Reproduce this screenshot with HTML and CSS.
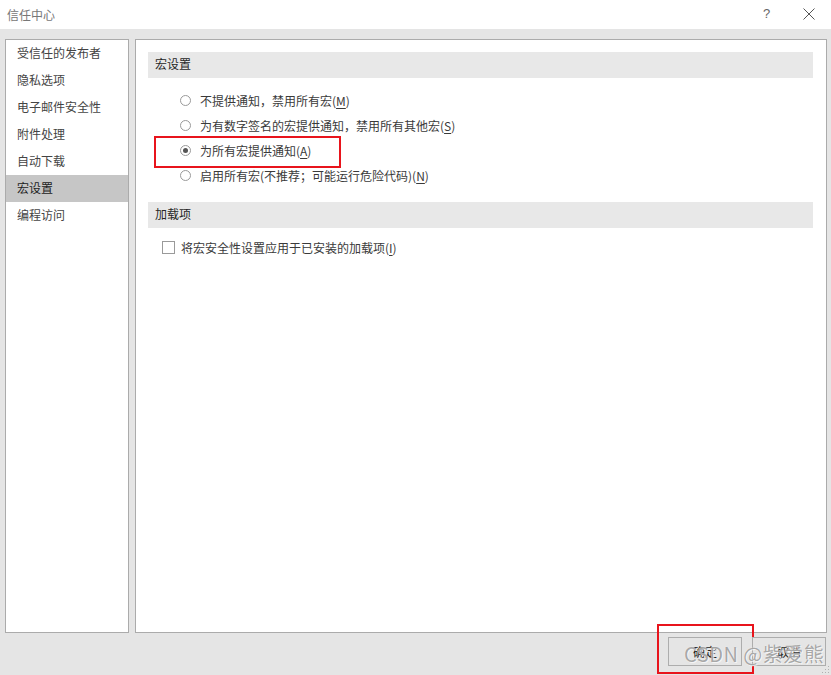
FILE: index.html
```html
<!DOCTYPE html>
<html lang="zh-CN">
<head>
<meta charset="utf-8">
<title>信任中心</title>
<link rel="stylesheet" href="styles.css">
</head>
<body>
<div class="dialog">
  <div class="titlebar">
    <span class="title">信任中心</span>
    <div class="title-controls">
      <span class="help">?</span>
      <svg class="close" width="12" height="12" viewBox="0 0 12 12"><path d="M0.5 0.5 L11.5 11.5 M11.5 0.5 L0.5 11.5" stroke="#555" stroke-width="1" fill="none"/></svg>
    </div>
  </div>
  <div class="body">
    <div class="nav">
      <div class="nav-item">受信任的发布者</div>
      <div class="nav-item">隐私选项</div>
      <div class="nav-item">电子邮件安全性</div>
      <div class="nav-item">附件处理</div>
      <div class="nav-item">自动下载</div>
      <div class="nav-item active">宏设置</div>
      <div class="nav-item">编程访问</div>
    </div>
    <div class="content">
      <div class="section-head">宏设置</div>
      <div class="radios">
        <div class="radio-row"><span class="radio"></span><span>不提供通知，禁用所有宏(<u>M</u>)</span></div>
        <div class="radio-row"><span class="radio"></span><span>为有数字签名的宏提供通知，禁用所有其他宏(<u>S</u>)</span></div>
        <div class="radio-row"><span class="radio checked"></span><span>为所有宏提供通知(<u>A</u>)</span><span class="mark mark-radio"></span></div>
        <div class="radio-row"><span class="radio"></span><span>启用所有宏(不推荐；可能运行危险代码)(<u>N</u>)</span></div>
      </div>
      <div class="section-head">加载项</div>
      <div class="check-row"><span class="checkbox"></span><span>将宏安全性设置应用于已安装的加载项(<u>I</u>)</span></div>
    </div>
  </div>
  <div class="footer">
    <div class="btn ok">确定<span class="mark mark-ok"></span></div>
    <div class="btn">取消</div>
    <span class="watermark">CSDN @紫爱熊</span>
    <svg class="grip" width="8" height="8" viewBox="0 0 8 8"><g fill="#b0b0b0"><rect x="6" y="0" width="1" height="1"/><rect x="3" y="3" width="1" height="1"/><rect x="6" y="3" width="1" height="1"/><rect x="0" y="6" width="1" height="1"/><rect x="3" y="6" width="1" height="1"/><rect x="6" y="6" width="1" height="1"/></g></svg>
  </div>
</div>
</body>
</html>
```
FILE: styles.css
```css
* { box-sizing: border-box; }
html, body { margin: 0; padding: 0; }
body {
  width: 831px;
  height: 675px;
  overflow: hidden;
  font-family: "Noto Sans CJK SC", "Microsoft YaHei", sans-serif;
  font-size: 12px;
  color: #333;
  background: #e5e5e5;
}
.dialog { width: 831px; height: 675px; display: flex; flex-direction: column; position: relative; }
.titlebar {
  height: 29px;
  background: #fff;
  display: flex;
  align-items: center;
  justify-content: space-between;
  padding: 0 0 0 7px;
}
.title { color: #777; font-size: 12px; margin-top: -1px; }
.title-controls { display: flex; align-items: center; height: 100%; }
.help { color: #666; font-family: "Liberation Sans", sans-serif; font-size: 13px; width: 45px; text-align: center; margin-top: -2px; }
.close { margin: -2px 16px 0 14px; }
.body {
  flex: 0 0 auto;
  height: 604px;
  padding: 10px 4px 0 5px;
  display: flex;
  gap: 6px;
}
.nav {
  width: 124px;
  height: 594px;
  background: #fff;
  border: 1px solid #ababab;
}
.nav-item {
  height: 27px;
  line-height: 25px;
  padding-left: 11px;
  color: #444;
}
.nav-item.active { background: #c6c6c6; color: #222; }
.content {
  flex: 1;
  height: 594px;
  background: #fff;
  border: 1px solid #ababab;
  padding: 12px 13px 0 12px;
}
.section-head {
  height: 26px;
  line-height: 23px;
  background: #e8e8e8;
  padding-left: 7px;
  color: #262626;
}
.radios { padding: 10px 0 14px 32px; }
.radio-row {
  height: 25px;
  display: flex;
  align-items: center;
  gap: 9px;
  position: relative;
  color: #3a3a3a;
}
.radio {
  width: 11px;
  height: 11px;
  border: 1px solid #9a9a9a;
  border-radius: 50%;
  display: inline-flex;
  align-items: center;
  justify-content: center;
  flex: none;
}
.radio.checked::after {
  content: "";
  width: 5px;
  height: 5px;
  border-radius: 50%;
  background: #555;
}
.check-row {
  display: flex;
  align-items: center;
  gap: 6px;
  height: 20px;
  margin-top: 9px;
  padding-left: 14px;
  color: #3a3a3a;
}
.checkbox {
  width: 13px;
  height: 13px;
  border: 1px solid #9a9a9a;
  background: #fff;
  flex: none;
}
u { text-decoration: underline; text-underline-offset: 2px; }
.mark {
  position: absolute;
  border: 2px solid #e8141c;
  pointer-events: none;
}
.mark-radio { left: -26px; top: -2px; width: 187px; height: 32px; }
.footer {
  flex: 1;
  display: flex;
  align-items: flex-start;
  gap: 10px;
  padding: 4px 5px 0 668px;
  position: relative;
}
.btn {
  width: 74px;
  height: 29px;
  flex: none;
  border: 1px solid #adadad;
  background: #e5e5e5;
  color: #222;
  display: flex;
  align-items: center;
  justify-content: center;
  position: relative;
}
.mark-ok { left: -12px; top: -14px; width: 97px; height: 50px; }
.watermark {
  position: absolute;
  left: 684px;
  top: 6px;
  font-family: "Noto Sans CJK SC", sans-serif;
  font-size: 20px;
  color: rgba(130, 130, 130, 0.7);
  text-shadow: 0 0 1px #fff, 1px 1px 0 rgba(255,255,255,0.6);
  white-space: nowrap;
  letter-spacing: 0.5px;
}
.grip { position: absolute; right: 1px; bottom: 1px; }
```
